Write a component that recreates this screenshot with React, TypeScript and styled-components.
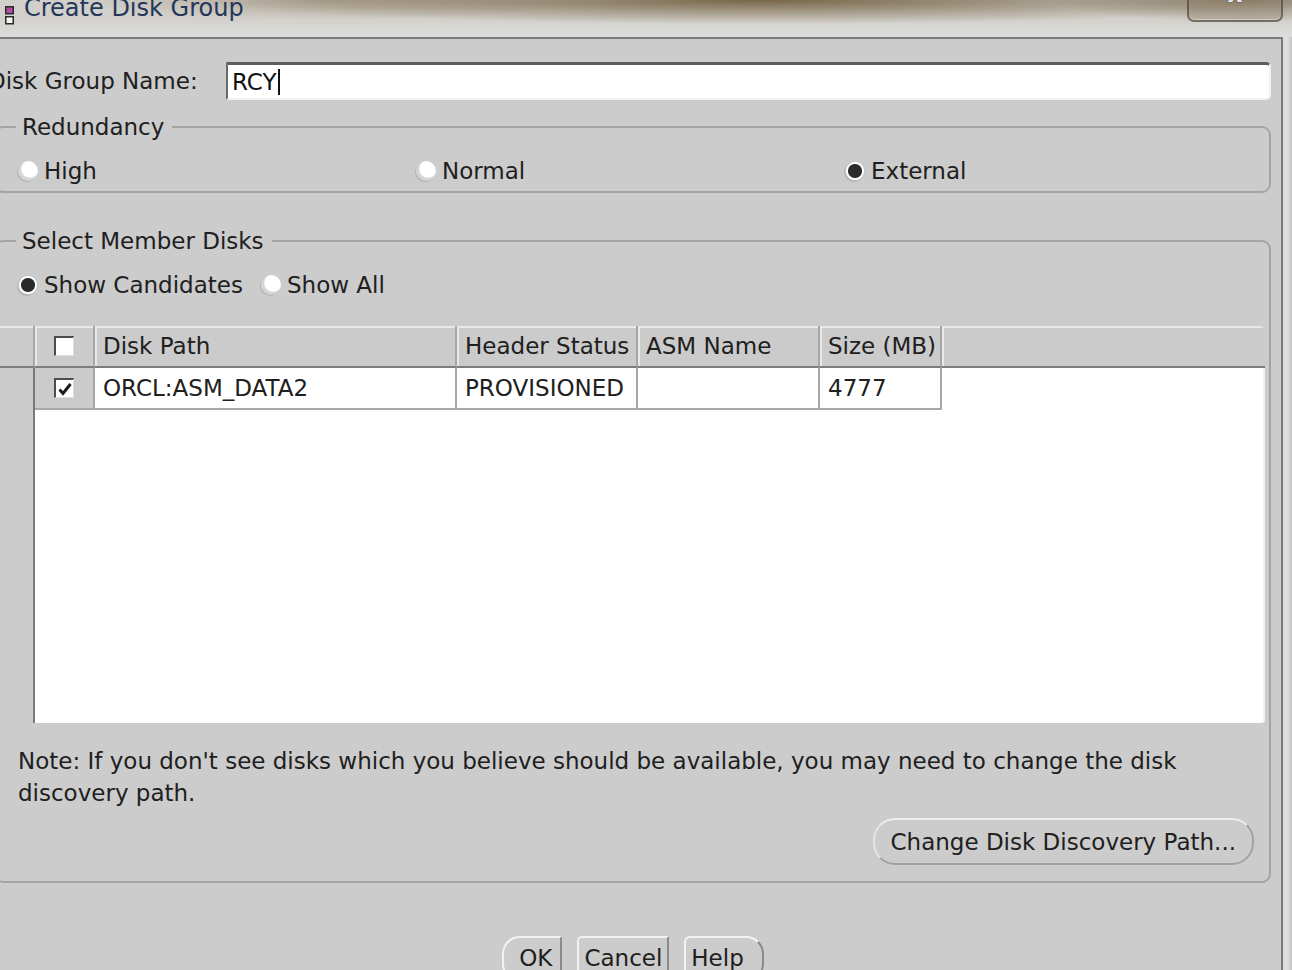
import React from 'react'
import styled, { createGlobalStyle } from 'styled-components'

const GlobalStyle = createGlobalStyle`
  html, body {
    margin: 0;
    padding: 0;
  }
  body {
    background: #cccccc;
    font-family: "DejaVu Sans", "Liberation Sans", sans-serif;
    color: #202020;
  }
`

const Window = styled.div`
  width: 1292px;
  height: 970px;
  overflow: hidden;
  display: flex;
  flex-direction: column;
  background: #cccccc;
`

const TitleBar = styled.div`
  height: 37px;
  flex-shrink: 0;
  display: flex;
  align-items: flex-start;
  background-color: #d2d0cb;
  background-image:
    radial-gradient(ellipse 560px 24px at 760px 0px, rgba(112, 92, 60, 0.92), rgba(112, 92, 60, 0) 100%),
    radial-gradient(ellipse 200px 22px at 1250px 0px, rgba(118, 104, 80, 0.75), rgba(118, 104, 80, 0) 100%),
    radial-gradient(ellipse 260px 20px at 330px 0px, rgba(150, 135, 110, 0.55), rgba(150, 135, 110, 0) 100%),
    linear-gradient(to bottom, rgba(220, 220, 220, 0) 50%, #dddddd 100%);
`

const IconWrap = styled.div`
  margin: 6px 0 0 5px;
  width: 9px;
  height: 19px;
`

const TitleText = styled.div`
  margin: -6px 0 0 10px;
  font-size: 24px;
  line-height: 28px;
  color: #24365a;
  white-space: nowrap;
`

const CloseButton = styled.div`
  margin: -4px 9px 0 auto;
  width: 92px;
  height: 24px;
  border: 2px solid rgba(64, 54, 44, 0.55);
  border-top: none;
  border-radius: 0 0 7px 7px;
  background: rgba(140, 125, 100, 0.35);
  box-shadow: inset 0 -1px 0 rgba(255, 255, 255, 0.35);
  display: flex;
  justify-content: center;
  overflow: hidden;
`

const CloseGlyph = styled.span`
  margin-top: -14px;
  font-size: 24px;
  font-weight: bold;
  line-height: 24px;
  color: #e4e6ee;
  text-shadow: 0 0 2px #2c2c44;
`

const Body = styled.div`
  flex: 1;
  display: flex;
  min-height: 0;
`

const Content = styled.div`
  flex: 1;
  border-top: 2px solid #7b7b7b;
  border-right: 2px solid #7b7b7b;
  overflow: hidden;
  background: #cccccc;
`

const RightFrame = styled.div`
  width: 9px;
  flex-shrink: 0;
  background: linear-gradient(to right, #d9d9d9, #e2e2e2 40%, #c4c4c4);
`

const Inner = styled.div`
  margin-left: -12px;
  padding-right: 10px;
  display: flex;
  flex-direction: column;
`

const NameRow = styled.div`
  display: flex;
  align-items: center;
  height: 38px;
  margin-top: 23px;
`

const NameLabel = styled.div`
  width: 238px;
  flex-shrink: 0;
  font-size: 23px;
  white-space: nowrap;
`

const NameField = styled.div`
  flex: 1;
  height: 100%;
  box-sizing: border-box;
  display: flex;
  align-items: center;
  padding-left: 4px;
  background: #ffffff;
  border-top: 3px solid #5e5e5e;
  border-left: 2px solid #6a6a6a;
  border-bottom: 2px solid #f2f2f2;
  border-right: 2px solid #f2f2f2;
  border-radius: 0 5px 5px 0;
  font-size: 23px;
  color: #111;
`

const Caret = styled.span`
  width: 2px;
  height: 26px;
  margin-left: 1px;
  background: #111;
`

const Group = styled.fieldset<{ $top: number }>`
  margin: ${p => p.$top}px 0 0 6px;
  padding: 0 4px ${p => (p.$top > 20 ? 16 : 5)}px 0;
  min-inline-size: 0;
  border: 2px solid #a4a4a4;
  border-radius: 9px;
`

const Legend = styled.legend`
  margin-left: 20px;
  padding: 0 8px 0 6px;
  font-size: 23px;
  line-height: 26px;
  color: #202020;
`

const RadioGrid = styled.div<{ $cols: string; $top: number }>`
  display: grid;
  grid-template-columns: ${p => p.$cols};
  height: 30px;
  margin-top: ${p => p.$top}px;
  padding-left: 22px;
`

const RadioLabel = styled.label`
  display: flex;
  align-items: center;
  gap: 6px;
  font-size: 23px;
  line-height: 30px;
  white-space: nowrap;
`

const RadioDot = styled.span<{ $on?: boolean }>`
  width: 20px;
  height: 20px;
  flex-shrink: 0;
  border-radius: 50%;
  background: ${p =>
    p.$on
      ? 'radial-gradient(circle, #2b2b2b 0 6.5px, #ffffff 7.5px 8.5px, #c4c4c4 9.5px)'
      : 'radial-gradient(circle at 60% 40%, #ffffff 0 8px, #d4d4d4 9.5px)'};
  box-shadow: -1px 1px 0 rgba(150, 150, 150, 0.5);
`

const Table = styled.div`
  display: grid;
  grid-template-columns: 39px 60px 362px 181px 182px 122px 1fr;
  grid-template-rows: 42px 42px 1fr;
  height: 397px;
  margin-top: 26px;
  background: #ffffff;
  border-radius: 0 6px 4px 0;
  overflow: hidden;
  box-shadow: inset -2px 0 0 #f2f2f2;
`

const HeadCell = styled.div<{ $center?: boolean; $last?: boolean }>`
  background: #cbcbcb;
  border-bottom: 2px solid #7c7c7c;
  border-right: ${p => (p.$last ? 'none' : '2px solid #a6a6a6')};
  box-shadow: inset 2px 2px 0 #e8e8e8;
  display: flex;
  align-items: center;
  justify-content: ${p => (p.$center ? 'center' : 'flex-start')};
  padding-left: ${p => (p.$center ? 0 : 8)}px;
  font-size: 23px;
  white-space: nowrap;
  overflow: hidden;
`

const RowGutter = styled.div`
  grid-column: 1;
  grid-row: 2 / 4;
  background: #cccccc;
  border-right: 2px solid #7a7a7a;
`

const Cell = styled.div<{ $gray?: boolean }>`
  background: ${p => (p.$gray ? '#cbcbcb' : '#ffffff')};
  border-right: 2px solid #a8a8a8;
  border-bottom: 2px solid #a8a8a8;
  display: flex;
  align-items: center;
  justify-content: ${p => (p.$gray ? 'center' : 'flex-start')};
  padding-left: ${p => (p.$gray ? 0 : 8)}px;
  font-size: 23px;
  white-space: nowrap;
`

const CheckBox = styled.span`
  width: 20px;
  height: 20px;
  box-sizing: border-box;
  background: #ffffff;
  border-top: 2px solid #4c4c4c;
  border-left: 2px solid #4c4c4c;
  border-right: 1px solid #dedede;
  border-bottom: 1px solid #dedede;
  display: flex;
  align-items: center;
  justify-content: center;
`

const Note = styled.p`
  margin: 22px 0 0;
  padding-left: 22px;
  font-size: 23px;
  line-height: 32px;
`

const ButtonRow = styled.div`
  display: flex;
  justify-content: flex-end;
  margin-top: 9px;
  padding-right: 11px;
`

const PillButton = styled.button`
  height: 47px;
  padding: 0 16px;
  background: #cccccc;
  border: 2px solid #a2a2a2;
  border-top-color: #ededed;
  border-left-color: #e4e4e4;
  border-radius: 22px;
  font-family: inherit;
  font-size: 23px;
  color: #202020;
`

const Footer = styled.div`
  display: flex;
  justify-content: center;
  gap: 15px;
  margin-top: 53px;
  padding-left: 7px;
`

const DialogButton = styled.button<{ $pos: 'first' | 'middle' | 'last' }>`
  height: 46px;
  padding: 0
    ${p => (p.$pos === 'last' ? 18 : p.$pos === 'first' ? 8 : 5)}px
    0
    ${p => (p.$pos === 'first' ? 15 : 5)}px;
  background: #cccccc;
  border: 2px solid #f2f2f2;
  border-right-color: #8a8a8a;
  border-bottom-color: #8a8a8a;
  border-radius: ${p =>
    p.$pos === 'first' ? '18px 2px 2px 18px' : p.$pos === 'last' ? '6px 18px 18px 6px' : '5px 2px 2px 2px'};
  font-family: inherit;
  font-size: 23px;
  line-height: 40px;
  color: #202020;
  display: flex;
  align-items: flex-start;
`

const AppIcon = () => (
  <IconWrap>
    <svg width="9" height="19" viewBox="0 0 9 19">
      <rect x="0.75" y="0.75" width="7.5" height="7" fill="#b44aa6" stroke="#2a2a2a" strokeWidth="1.5" />
      <rect x="0.75" y="10.75" width="7.5" height="7" fill="#f4f4f4" stroke="#2a2a2a" strokeWidth="1.5" />
    </svg>
  </IconWrap>
)

const Radio = ({ on, children }: { on?: boolean; children: React.ReactNode }) => (
  <RadioLabel>
    <RadioDot $on={on} />
    {children}
  </RadioLabel>
)

const Check = ({ checked }: { checked?: boolean }) => (
  <CheckBox>
    {checked && (
      <svg width="16" height="16" viewBox="0 0 16 16">
        <path d="M2.5 8.5 L6 12.5 L13.5 3" fill="none" stroke="#1c1c1c" strokeWidth="3" />
      </svg>
    )}
  </CheckBox>
)

const columns = ['Disk Path', 'Header Status', 'ASM Name', 'Size (MB)']
const disks = [{ path: 'ORCL:ASM_DATA2', status: 'PROVISIONED', name: '', size: '4777' }]

export default function App() {
  return (
    <>
      <GlobalStyle />
      <Window>
        <TitleBar>
          <AppIcon />
          <TitleText>Create Disk Group</TitleText>
          <CloseButton>
            <CloseGlyph>x</CloseGlyph>
          </CloseButton>
        </TitleBar>
        <Body>
          <Content>
            <Inner>
              <NameRow>
                <NameLabel>Disk Group Name:</NameLabel>
                <NameField>
                  RCY
                  <Caret />
                </NameField>
              </NameRow>

              <Group $top={14}>
                <Legend>Redundancy</Legend>
                <RadioGrid $cols="398px 429px 1fr" $top={16}>
                  <Radio>High</Radio>
                  <Radio>Normal</Radio>
                  <Radio on>External</Radio>
                </RadioGrid>
              </Group>

              <Group $top={35}>
                <Legend>Select Member Disks</Legend>
                <RadioGrid $cols="243px 1fr" $top={16}>
                  <Radio on>Show Candidates</Radio>
                  <Radio>Show All</Radio>
                </RadioGrid>

                <Table>
                  <HeadCell />
                  <HeadCell $center>
                    <Check />
                  </HeadCell>
                  {columns.map(c => (
                    <HeadCell key={c}>{c}</HeadCell>
                  ))}
                  <HeadCell $last />

                  <RowGutter />
                  {disks.map(d => (
                    <React.Fragment key={d.path}>
                      <Cell $gray>
                        <Check checked />
                      </Cell>
                      <Cell>{d.path}</Cell>
                      <Cell>{d.status}</Cell>
                      <Cell>{d.name}</Cell>
                      <Cell>{d.size}</Cell>
                    </React.Fragment>
                  ))}
                </Table>

                <Note>
                  Note: If you don't see disks which you believe should be available, you may need to change the disk
                  <br />
                  discovery path.
                </Note>
                <ButtonRow>
                  <PillButton>Change Disk Discovery Path...</PillButton>
                </ButtonRow>
              </Group>

              <Footer>
                <DialogButton $pos="first">OK</DialogButton>
                <DialogButton $pos="middle">Cancel</DialogButton>
                <DialogButton $pos="last">Help</DialogButton>
              </Footer>
            </Inner>
          </Content>
          <RightFrame />
        </Body>
      </Window>
    </>
  )
}
